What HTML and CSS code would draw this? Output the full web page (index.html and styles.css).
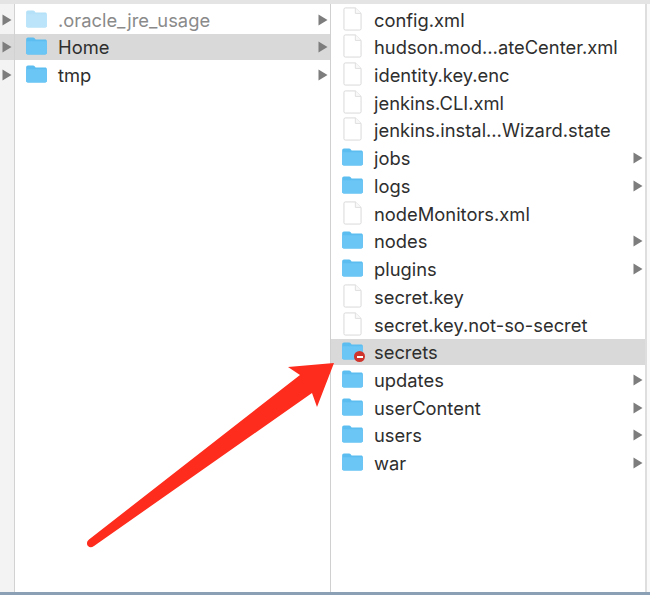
FILE: index.html
```html
<!DOCTYPE html>
<html lang="en">
<head>
<meta charset="utf-8">
<title>Finder</title>
<link rel="stylesheet" href="styles.css">
</head>
<body>
<svg class="defs" width="0" height="0" aria-hidden="true">
  <symbol id="folder" viewBox="0 0 24 20">
    <path d="M0.5 2.6C0.5 1.4 1.3 0.5 2.5 0.5H8.2C9 0.5 9.6 0.9 10.2 1.6L11 2.7H21.6C22.8 2.7 23.5 3.4 23.5 4.6V17.6C23.5 18.8 22.8 19.500 21.6 19.500H2.4C1.2 19.500 0.5 18.8 0.5 17.6Z" fill="#5cbdf0"/>
    <path d="M0.5 5.6C0.5 4.9 1 4.6 1.7 4.6H22.3C23 4.6 23.5 4.9 23.5 5.6V17.6C23.5 18.8 22.8 19.500 21.6 19.500H2.4C1.2 19.500 0.5 18.8 0.5 17.6Z" fill="#6bc5f5"/>
  </symbol>
  <symbol id="doc" viewBox="0 0 20 26" preserveAspectRatio="none">
    <path d="M1 2.500C1 1.500 1.500 1 2.500 1H13L19 7V23.500C19 24.500 18.500 25 17.500 25H2.500C1.500 25 1 24.500 1 23.500Z" fill="#fff" stroke="#d6d6d6" stroke-width="1"/>
    <path d="M13 1V7H19" fill="#f8f8f8" stroke="#dedede" stroke-width="1"/>
  </symbol>
  <symbol id="tri" viewBox="0 0 10 12">
    <path d="M0.5 0.5L9.500 6L0.5 11.500Z" fill="#7d7d7d"/>
  </symbol>
</svg>
<div class="topbar"></div>
<main class="browser">
  <section class="col col-stub">
    <div class="row"><svg class="tri"><use href="#tri"/></svg></div>
    <div class="row selected"><svg class="tri"><use href="#tri"/></svg></div>
    <div class="row"><svg class="tri"><use href="#tri"/></svg></div>
  </section>
  <section class="col col-mid">
    <div class="row"><svg class="folder faded"><use href="#folder"/></svg><span class="name dim">.oracle_jre_usage</span><svg class="tri"><use href="#tri"/></svg></div>
    <div class="row selected"><svg class="folder"><use href="#folder"/></svg><span class="name">Home</span><svg class="tri"><use href="#tri"/></svg></div>
    <div class="row"><svg class="folder"><use href="#folder"/></svg><span class="name">tmp</span><svg class="tri"><use href="#tri"/></svg></div>
  </section>
  <section class="col col-right">
    <div class="row"><svg class="doc"><use href="#doc"/></svg><span class="name">config.xml</span></div>
    <div class="row"><svg class="doc"><use href="#doc"/></svg><span class="name">hudson.mod…ateCenter.xml</span></div>
    <div class="row"><svg class="doc"><use href="#doc"/></svg><span class="name">identity.key.enc</span></div>
    <div class="row"><svg class="doc"><use href="#doc"/></svg><span class="name">jenkins.CLI.xml</span></div>
    <div class="row"><svg class="doc"><use href="#doc"/></svg><span class="name">jenkins.instal…Wizard.state</span></div>
    <div class="row"><svg class="folder"><use href="#folder"/></svg><span class="name">jobs</span><svg class="tri"><use href="#tri"/></svg></div>
    <div class="row"><svg class="folder"><use href="#folder"/></svg><span class="name">logs</span><svg class="tri"><use href="#tri"/></svg></div>
    <div class="row"><svg class="doc"><use href="#doc"/></svg><span class="name">nodeMonitors.xml</span></div>
    <div class="row"><svg class="folder"><use href="#folder"/></svg><span class="name">nodes</span><svg class="tri"><use href="#tri"/></svg></div>
    <div class="row"><svg class="folder"><use href="#folder"/></svg><span class="name">plugins</span><svg class="tri"><use href="#tri"/></svg></div>
    <div class="row"><svg class="doc"><use href="#doc"/></svg><span class="name">secret.key</span></div>
    <div class="row"><svg class="doc"><use href="#doc"/></svg><span class="name">secret.key.not-so-secret</span></div>
    <div class="row selected">
      <span class="icon-wrap">
        <svg class="folder"><use href="#folder"/></svg>
        <span class="badge"></span>
      </span>
      <span class="name">secrets</span>
    </div>
    <div class="row"><svg class="folder"><use href="#folder"/></svg><span class="name">updates</span><svg class="tri"><use href="#tri"/></svg></div>
    <div class="row"><svg class="folder"><use href="#folder"/></svg><span class="name">userContent</span><svg class="tri"><use href="#tri"/></svg></div>
    <div class="row"><svg class="folder"><use href="#folder"/></svg><span class="name">users</span><svg class="tri"><use href="#tri"/></svg></div>
    <div class="row"><svg class="folder"><use href="#folder"/></svg><span class="name">war</span><svg class="tri"><use href="#tri"/></svg></div>
  </section>
  <div class="edge"></div>
</main>
<div class="bottombar"></div>
<svg class="arrow" viewBox="0 0 650 595" aria-hidden="true">
  <path d="M334 363L288 367L300 375L89 539.500C86.500 541.500 86.500 544.500 88 546C89.500 547.500 91.500 547.800 94 546L312 393L317 407Z" fill="#fd2c1c"/>
</svg>
</body>
</html>
```
FILE: styles.css
```css
* { box-sizing: border-box; }
html, body { margin: 0; height: 100%; }
body {
  width: 650px;
  height: 595px;
  overflow: hidden;
  display: flex;
  flex-direction: column;
  background: #fff;
  font-family: "Inter", "Liberation Sans", sans-serif;
  position: relative;
}
.defs { position: absolute; }
.topbar { height: 4px; flex: none; background: #e4e4e4; }
.bottombar { height: 3px; flex: none; background: #8ba0b5; }
.browser { flex: 1; display: flex; min-height: 0; }
.col {
  display: flex;
  flex-direction: column;
  gap: 1.72px;
  padding-top: 2.6px;
  border-right: 1px solid #d0d0d0;
}
.col-stub { width: 15px; background: #f3f3f3; border-right-color: #d2d2d2; }
.col-mid { width: 316px; }
.col-right { width: 314px; border-right: none; }
.edge { flex: 1; background: #fafafa; border-left: 2px solid #dedede; }
.row {
  height: 26px;
  flex: none;
  display: flex;
  align-items: center;
  padding-left: 10px;
  padding-right: 2px;
  font-size: 18.35px;
  color: #2e2e2e;
}
.col-stub .row { padding: 0 0 0 2px; }
.selected { background: #d9d9d9; }
.folder { width: 23px; height: 18px; flex: none; margin-top: -2px; }
.faded { opacity: .45; }
.doc { width: 19px; height: 24px; flex: none; margin: -2px 2px 0 2px; }
.name { margin-left: 10px; flex: 1; white-space: nowrap; }
.dim { color: #8a8a8a; }
.tri { width: 10px; height: 12px; flex: none; }
.icon-wrap { position: relative; width: 23px; height: 18px; flex: none; margin-top: -2px; }
.icon-wrap .folder { display: block; margin-top: 0; }
.badge {
  position: absolute;
  right: -1px;
  bottom: -2px;
  width: 11px;
  height: 11px;
  border-radius: 50%;
  background: #cf352c;
}
.badge::after {
  content: "";
  position: absolute;
  left: 2.5px;
  top: 4.5px;
  width: 6px;
  height: 2px;
  background: #fff;
}
.arrow { position: absolute; inset: 0; width: 650px; height: 595px; pointer-events: none; }
```
